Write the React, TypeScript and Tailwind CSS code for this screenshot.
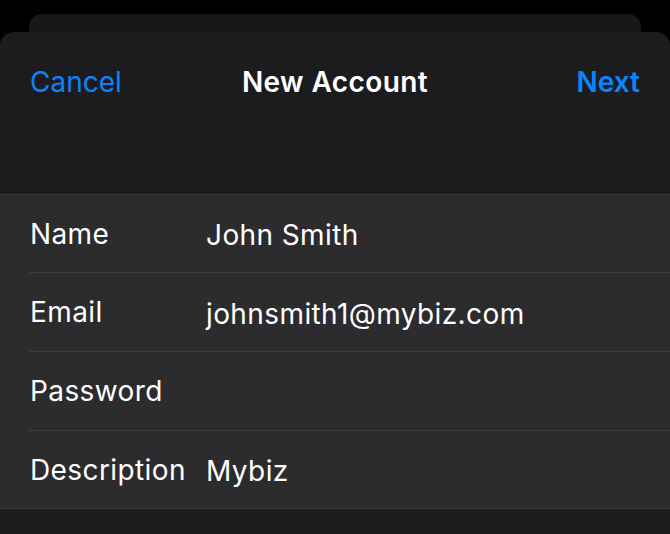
import React from 'react';

const rows = [
  { label: 'Name', value: 'John Smith', h: 'h-[78px]' },
  { label: 'Email', value: 'johnsmith1@mybiz.com', h: 'h-[79px]' },
  { label: 'Password', value: '', h: 'h-[79px]' },
  { label: 'Description', value: 'Mybiz', h: 'h-[77px]' },
];

export default function App() {
  return (
    <div
      className="flex h-screen flex-col overflow-hidden bg-black pt-[14px] text-white"
      style={{ fontFamily: 'Inter, "Noto Sans", sans-serif' }}
    >
      {/* card stacked behind */}
      <div className="mx-[29px] h-[18px] shrink-0 rounded-t-[13px] bg-[#18181a]" />

      {/* sheet */}
      <div className="flex flex-1 flex-col rounded-t-[14px] bg-[#1c1c1e]">
        <div className="grid h-[100px] grid-cols-[1fr_auto_1fr] items-center px-[30px] text-[28px]">
          <button className="justify-self-start text-[#0a84ff]">Cancel</button>
          <h1 className="font-semibold tracking-[0.4px]">New Account</h1>
          <button className="justify-self-end font-semibold text-[#0a84ff]">Next</button>
        </div>

        <div className="mt-[62px] border-y border-[#3a3a3c] bg-[#2c2c2e]">
          {rows.map((row, i) => (
            <div key={row.label} className="pl-[29px]">
              <div
                className={`flex ${row.h} items-center text-[28px] tracking-[0.4px] ${
                  i < rows.length - 1 ? 'border-b border-[#3d3d40]' : ''
                }`}
              >
                <span className="w-[177px] shrink-0 pl-px">{row.label}</span>
                <span className="mt-[3px]">{row.value}</span>
              </div>
            </div>
          ))}
        </div>
      </div>
    </div>
  );
}
